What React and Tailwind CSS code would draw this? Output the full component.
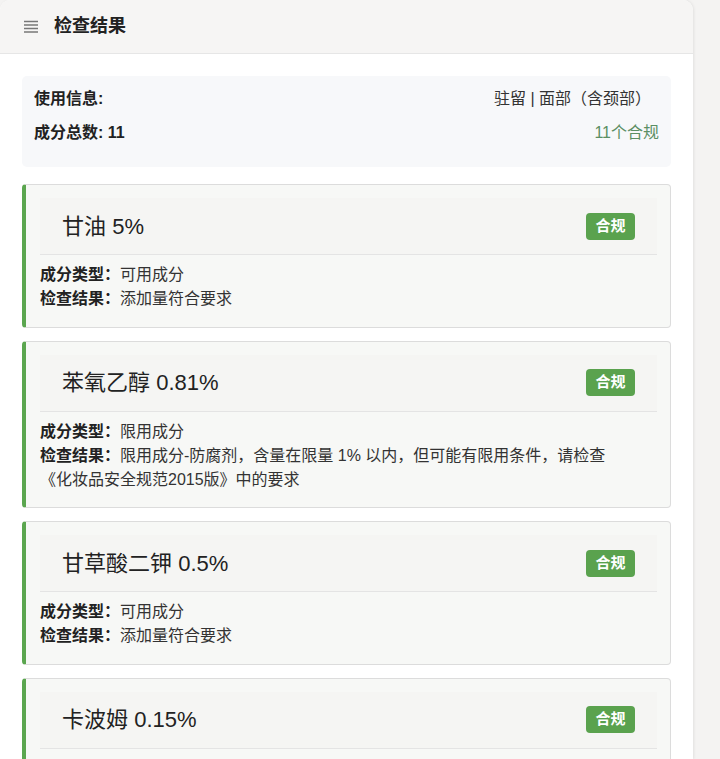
import React from "react";

const items = [
  { name: "甘油", pct: "5%", type: "可用成分", result: ["添加量符合要求"] },
  {
    name: "苯氧乙醇",
    pct: "0.81%",
    type: "限用成分",
    result: [
      "限用成分-防腐剂，含量在限量 1% 以内，但可能有限用条件，请检查",
      "《化妆品安全规范2015版》中的要求",
    ],
  },
  { name: "甘草酸二钾", pct: "0.5%", type: "可用成分", result: ["添加量符合要求"] },
  { name: "卡波姆", pct: "0.15%", type: "可用成分", result: ["添加量符合要求"] },
];

const font = { fontFamily: '"Liberation Sans", Arial, "Noto Sans CJK SC", sans-serif' };

function Card({ it }) {
  return (
    <div className="mb-[13px] rounded-[4px] border border-[#dcdcdc] border-l-4 border-l-[#5ba64f] bg-[#f7f8f6] pt-[13px] pb-[15.5px] pl-[14px] pr-[13px]">
      <div className="flex h-[57px] items-center justify-between border-b border-[#e4e4e4] bg-[#f5f5f3] px-[22px]">
        <div className="text-[22px] text-[#222]">
          {it.name} {it.pct}
        </div>
        <span className="flex h-[27px] w-[49px] items-center justify-center rounded-[4px] bg-[#5aa24e] text-[15px] font-bold text-white">
          合规
        </span>
      </div>
      <div className="mt-2 text-[16px] leading-[24px] text-[#333]">
        <div>
          <b className="text-[#222]">成分类型：</b>
          {it.type}
        </div>
        <div>
          <b className="text-[#222]">检查结果：</b>
          {it.result.map((r, i) => (
            <React.Fragment key={i}>
              {i > 0 && <br />}
              {r}
            </React.Fragment>
          ))}
        </div>
      </div>
    </div>
  );
}

export default function App() {
  return (
    <div className="flex h-[759px] w-[720px] overflow-hidden bg-[#f4f3f2]" style={font}>
      <div className="h-full w-[693px] shrink-0 overflow-hidden rounded-t-[10px] bg-white shadow-[1px_0_3px_rgba(0,0,0,0.08)]">
        <div className="flex h-[54px] items-center border-b border-[#e6e6e6] bg-[#f6f5f4] pl-[24px]">
          <svg width="14" height="13" viewBox="0 0 14 13" className="mr-[16px]">
            <g stroke="#777" strokeWidth="1.3">
              <line x1="0" y1="1.5" x2="14" y2="1.5" />
              <line x1="0" y1="5" x2="14" y2="5" />
              <line x1="0" y1="8.5" x2="14" y2="8.5" />
              <line x1="0" y1="12" x2="14" y2="12" />
            </g>
          </svg>
          <div className="text-[18px] font-bold text-[#222]">检查结果</div>
        </div>
        <div className="px-[22px] pt-[22px]">
          <div className="mb-[17px] rounded-[5px] bg-[#f7f8fa] px-[12px] pt-[11px] pb-[22px] text-[16px] text-[#333]">
            <div className="mb-[10px] flex h-6 items-center justify-between">
              <b className="text-[#222]">使用信息:</b>
              <span className="pr-[8px]">驻留 | 面部（含颈部）</span>
            </div>
            <div className="flex h-6 items-center justify-between">
              <b className="text-[#222]">成分总数: 11</b>
              <span className="text-[#5b8f63]">11个合规</span>
            </div>
          </div>
          {items.map((it) => (
            <Card key={it.name} it={it} />
          ))}
        </div>
      </div>
    </div>
  );
}
